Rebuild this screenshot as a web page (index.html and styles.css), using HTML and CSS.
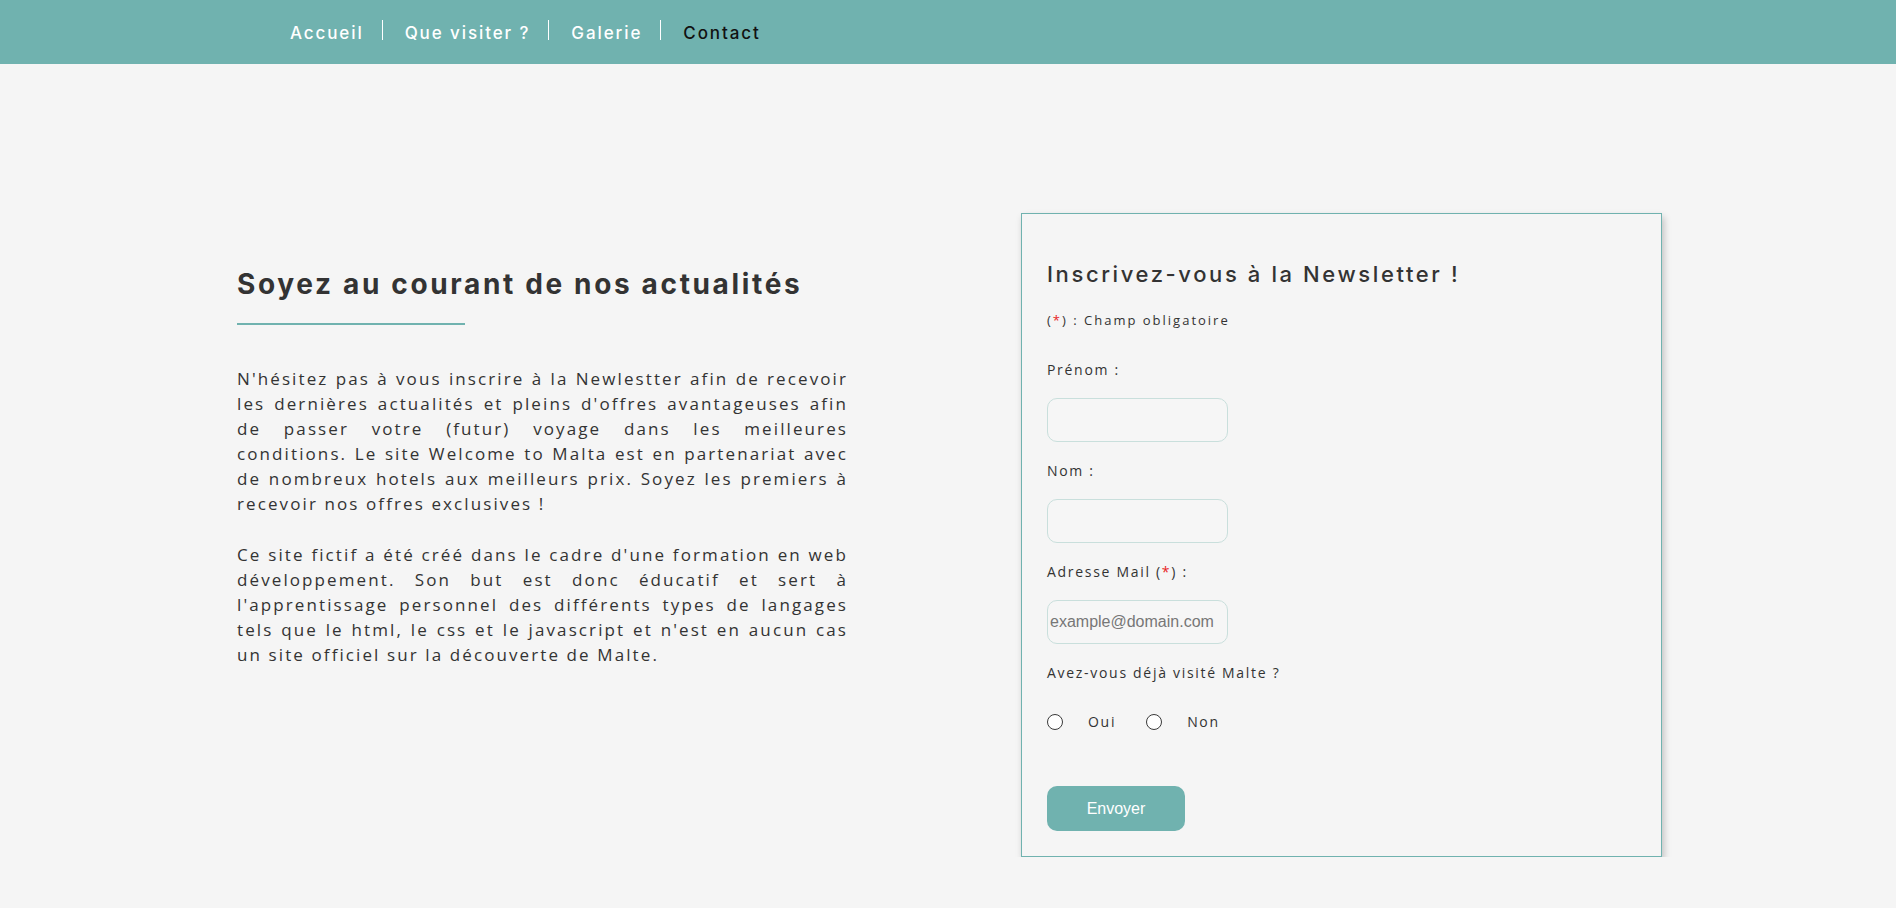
FILE: index.html
```html
<!DOCTYPE html>
<html lang="fr">
<head>
<meta charset="utf-8">
<title>Contact - Welcome to Malta</title>
<link rel="stylesheet" href="styles.css">
</head>
<body>
<header class="topbar">
  <nav>
    <ul class="menu">
      <li class="menu-item"><a class="menu-link" href="#">Accueil</a></li>
      <li class="menu-item"><a class="menu-link" href="#">Que visiter ?</a></li>
      <li class="menu-item"><a class="menu-link" href="#">Galerie</a></li>
      <li class="menu-item"><a class="menu-link active" href="#">Contact</a></li>
    </ul>
  </nav>
</header>
<main class="content">
  <section class="intro">
    <h2 class="intro-title">Soyez au courant de nos actualités</h2>
    <p class="intro-text">N'hésitez pas à vous inscrire à la Newlestter afin de recevoir les dernières actualités et pleins d'offres avantageuses afin de passer votre (futur) voyage dans les meilleures conditions. Le site Welcome to Malta est en partenariat avec de nombreux hotels aux meilleurs prix. Soyez les premiers à recevoir nos offres exclusives !</p>
    <p class="intro-text second">Ce site fictif a été créé dans le cadre d'une formation en web développement. Son but est donc éducatif et sert à l'apprentissage personnel des différents types de langages tels que le html, le css et le javascript et n'est en aucun cas un site officiel sur la découverte de Malte.</p>
  </section>
  <form class="newsletter">
    <h3 class="form-title">Inscrivez-vous à la Newsletter !</h3>
    <p class="note">(<span class="req">*</span>) : Champ obligatoire</p>
    <label class="field-label first" for="prenom">Prénom :</label>
    <input class="field" type="text" id="prenom">
    <label class="field-label" for="nom">Nom :</label>
    <input class="field" type="text" id="nom">
    <label class="field-label" for="mail">Adresse Mail (<span class="req">*</span>) :</label>
    <input class="field" type="email" id="mail" placeholder="example@domain.com">
    <p class="field-label">Avez-vous déjà visité Malte ?</p>
    <div class="choices">
      <input class="radio" type="radio" name="visite" id="oui">
      <label class="choice-label" for="oui">Oui</label>
      <input class="radio second-radio" type="radio" name="visite" id="non">
      <label class="choice-label" for="non">Non</label>
    </div>
    <button class="send" type="button">Envoyer</button>
  </form>
</main>
</body>
</html>
```

FILE: styles.css
```css
html, body {
  margin: 0;
  padding: 0;
}

body {
  background: #f5f5f5;
  color: #333;
  font-family: "Open Sans", "Liberation Sans", sans-serif;
}

.topbar {
  height: 64px;
  background: #70b2af;
}

.menu {
  display: flex;
  align-items: flex-start;
  margin: 0;
  padding: 0 0 0 268px;
  list-style: none;
}

.menu-item {
  margin-top: 20px;
  height: 20px;
}

.menu-item + .menu-item {
  border-left: 1px solid #fff;
}

.menu-link {
  display: block;
  padding: 0 18px 0 22px;
  line-height: 26px;
  font-family: Inter, "DejaVu Sans", sans-serif;
  font-weight: 500;
  font-size: 17px;
  letter-spacing: 1.9px;
  color: #fff;
  text-decoration: none;
  white-space: nowrap;
}

.menu-link.active {
  color: #111;
}

.content {
  display: flex;
  align-items: flex-start;
  justify-content: space-between;
  width: 1425px;
  margin-left: 237px;
  padding-top: 149px;
}

.intro {
  width: 611px;
  margin-top: 54px;
}

.intro-title {
  margin: 0;
  font-family: Inter, "DejaVu Sans", sans-serif;
  font-weight: 700;
  font-size: 28px;
  line-height: 34px;
  letter-spacing: 2.65px;
  color: #333;
  white-space: nowrap;
}

.intro-title::after {
  content: "";
  display: block;
  width: 228px;
  height: 2px;
  margin-top: 22px;
  background: #70b2af;
}

.intro-text {
  margin: 41px 0 0;
  font-size: 17px;
  line-height: 25px;
  letter-spacing: 2.1px;
  text-align: justify;
  color: #333;
}

.intro-text.second {
  margin-top: 26px;
}

.newsletter {
  display: flex;
  flex-direction: column;
  align-items: flex-start;
  width: 589px;
  padding: 46px 25px 25px;
  border: 1px solid #70b2af;
  box-shadow: 2px 4px 7px rgba(0, 0, 0, 0.22);
}

.form-title {
  margin: 0;
  font-family: Inter, "DejaVu Sans", sans-serif;
  font-weight: 500;
  font-size: 22px;
  line-height: 28px;
  letter-spacing: 2.6px;
  color: #333;
  white-space: nowrap;
}

.note,
.field-label,
.choice-label {
  font-size: 14px;
  line-height: 20px;
  letter-spacing: 1.7px;
  color: #333;
}

.note {
  margin: 22px 0 0;
  font-size: 13px;
  letter-spacing: 2px;
}

.field-label {
  display: block;
  margin: 19px 0 0;
}

.field-label.first {
  margin-top: 30px;
}

.req {
  color: #e8231f;
}

.field {
  box-sizing: border-box;
  width: 181px;
  height: 44px;
  margin: 18px 0 0;
  padding: 1px 2px;
  border: 1px solid #c9dfdc;
  border-radius: 10px;
  background: #f6f6f6;
  font-family: "Liberation Sans", Arial, sans-serif;
  font-size: 16px;
  color: #333;
  outline: none;
}

.field::placeholder {
  color: #777;
}

.choices {
  display: flex;
  align-items: center;
  height: 20px;
  margin-top: 29px;
}

.radio {
  appearance: none;
  -webkit-appearance: none;
  box-sizing: border-box;
  width: 16px;
  height: 16px;
  margin: 0;
  border: 1px solid #3a3a3a;
  border-radius: 50%;
  background: #fff;
}

.second-radio {
  margin-left: 30px;
}

.choice-label {
  margin-left: 25px;
}

.send {
  width: 138px;
  height: 45px;
  margin-top: 54px;
  border: none;
  border-radius: 10px;
  background: #70b2af;
  color: #fff;
  font-family: "Liberation Sans", Arial, sans-serif;
  font-size: 16px;
  cursor: pointer;
}
```
